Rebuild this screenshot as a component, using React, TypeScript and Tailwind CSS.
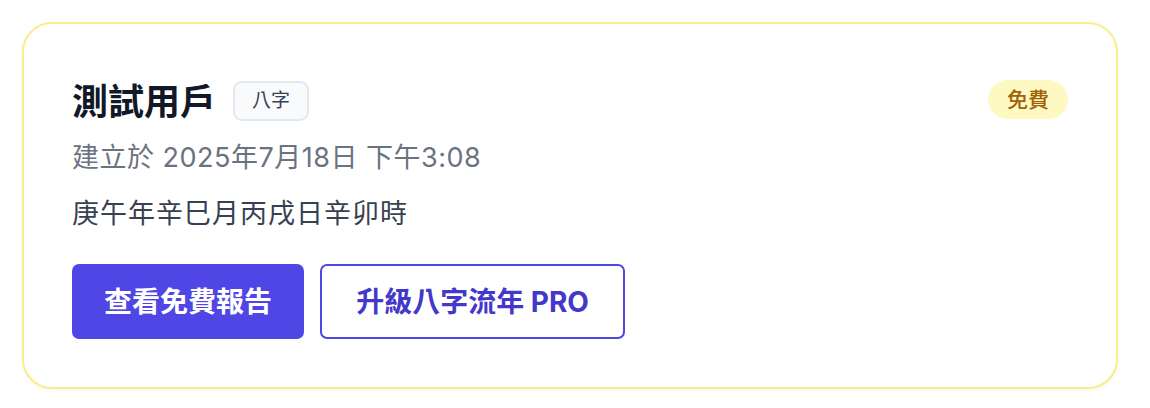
import React from "react";

export default function App() {
  return (
    <div
      className="w-[1150px] h-[408px] bg-white p-[22px]"
      style={{ fontFamily: '"Inter", "Noto Sans CJK TC", sans-serif' }}
    >
      <div className="w-[1096px] h-[367px] rounded-[30px] border-2 border-[#fbec8c] bg-white shadow-[0_2px_4px_rgba(0,0,0,0.04)] px-[48px] pt-[54px]">
        <div className="flex items-start justify-between">
          <div className="flex flex-col">
            <div className="flex items-center h-[48px] gap-[17px]">
              <span className="text-[36px] font-bold text-[#111827] leading-[48px]">測試用戶</span>
              <span className="-mt-[2px] h-[40px] px-[17px] flex items-center rounded-[9px] border-2 border-[#e2e8f0] bg-[#f8fafc] text-[19px] text-[#334155]">
                八字
              </span>
            </div>
            <div className="mt-[12px] text-[27px] leading-[40px] tracking-[0.5px] text-[#6b7280]">
              建立於 2025年7月18日 下午3:08
            </div>
            <div className="mt-[16px] text-[27px] leading-[40px] tracking-[1px] text-[#374151]">
              庚午年辛巳月丙戌日辛卯時
            </div>
          </div>
          <span className="mt-[2px] h-[39px] w-[80px] flex items-center justify-center rounded-full bg-[#fef9c3] text-[21px] font-medium text-[#a16207]">
            免費
          </span>
        </div>
        <div className="mt-[30px] flex gap-[16px]">
          <button className="h-[75px] w-[232px] flex items-center justify-center rounded-[7px] bg-[#4f46e5] text-white text-[28px] font-bold">
            查看免費報告
          </button>
          <button className="h-[75px] w-[305px] flex items-center justify-center rounded-[7px] border-2 border-[#4f46e5] bg-white text-[#4338ca] text-[28px] font-bold">
            升級八字流年 PRO
          </button>
        </div>
      </div>
    </div>
  );
}
